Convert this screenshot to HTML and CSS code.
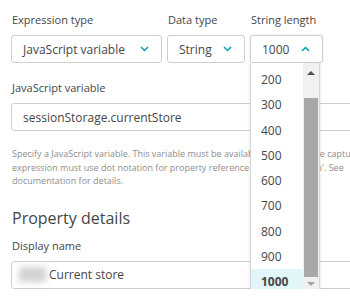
FILE: index.html
```html
<!DOCTYPE html>
<html lang="en">

<head>
    <meta charset="utf-8">
    <meta name="viewport" content="width=device-width, initial-scale=1.0">
    <title>Capture expression</title>
    <link rel="stylesheet" href="styles.css">
</head>

<body>
    <main class="form">
        <div class="row">
            <div class="field field-expr">
                <label class="label">Expression type</label>
                <div class="select">
                    <span>JavaScript variable</span>
                    <svg class="chevron" width="9" height="6" viewBox="0 0 9 6"><polyline points="1,1 4.5,4.5 8,1" /></svg>
                </div>
            </div>
            <div class="field field-type">
                <label class="label">Data type</label>
                <div class="select">
                    <span>String</span>
                    <svg class="chevron" width="9" height="6" viewBox="0 0 9 6"><polyline points="1,1 4.5,4.5 8,1" /></svg>
                </div>
            </div>
            <div class="field field-length">
                <label class="label">String length</label>
                <div class="select open">
                    <span>1000</span>
                    <svg class="chevron" width="9" height="6" viewBox="0 0 9 6"><polyline points="1,5 4.5,1.5 8,5" /></svg>
                </div>
                <!-- open dropdown list -->
                <div class="dropdown">
                    <ul class="options">
                        <li>200</li>
                        <li>300</li>
                        <li>400</li>
                        <li>500</li>
                        <li>600</li>
                        <li>700</li>
                        <li>800</li>
                        <li>900</li>
                        <li class="selected">1000</li>
                    </ul>
                    <div class="scrollbar">
                        <span class="arrow up"></span>
                        <span class="thumb"></span>
                        <span class="arrow down"></span>
                    </div>
                </div>
            </div>
        </div>

        <section class="group">
            <label class="label">JavaScript variable</label>
            <div class="input">sessionStorage.currentStore</div>
            <p class="help">Specify a JavaScript variable. This variable must be available at the time the capture<br>expression must use dot notation for property reference. i.e. 'app.location'. See<br>documentation for details.</p>
        </section>

        <h2 class="section-title">Property details</h2>
        <label class="label">Display name</label>
        <div class="input"><span class="redacted"></span>Current store</div>
    </main>
</body>

</html>
```

FILE: styles.css
```css
* {
    box-sizing: border-box;
}

body {
    margin: 0;
    overflow: hidden;
    background: #fff;
    color: #454646;
    font-family: "Open Sans", sans-serif;
}

.form {
    padding: 13px 0 0 11px;
}

.row {
    display: flex;
    gap: 5px;
}

.field {
    position: relative;
}

.field-expr {
    width: 151px;
}

.field-type {
    width: 78px;
}

.field-length {
    width: 73px;
}

.label {
    display: block;
    padding-left: 1px;
    margin-bottom: 8px;
    font-size: 11px;
    line-height: 14px;
}

.select {
    display: flex;
    align-items: center;
    justify-content: space-between;
    height: 28px;
    padding: 0 12px 0 11px;
    border: 1px solid #cfcfcf;
    border-radius: 3px;
    font-size: 12px;
}

.select.open {
    box-shadow: 0 0 2px rgba(0, 0, 0, 0.15);
}

.chevron polyline {
    fill: none;
    stroke: #00a1b2;
    stroke-width: 1.5;
}

.dropdown {
    position: absolute;
    top: 100%;
    left: 0;
    z-index: 2;
    display: flex;
    width: 70px;
    height: 231px;
    background: #fff;
    border: 1px solid #d6d6d6;
    border-top: none;
    box-shadow: 0 1px 3px rgba(0, 0, 0, 0.12);
}

.options {
    flex: 1;
    margin: 0;
    padding: 4px 0 0;
    list-style: none;
}

.options li {
    height: 25.25px;
    padding-left: 10px;
    font-size: 12px;
    line-height: 25.25px;
}

.options .selected {
    background: #e2f5f8;
    font-weight: 700;
}

.scrollbar {
    display: flex;
    flex-direction: column;
    align-items: center;
    width: 16px;
    background: #f1f1f1;
}

.arrow {
    width: 0;
    height: 0;
    border-left: 4px solid transparent;
    border-right: 4px solid transparent;
}

.arrow.up {
    margin: 8px 0 23px;
    border-bottom: 4px solid #505050;
}

.arrow.down {
    margin: 5px 0 7px;
    border-top: 4px solid #a3a3a3;
}

.thumb {
    flex: 1;
    width: 14px;
    background: #a8a8a8;
}

.group {
    margin-top: 18px;
}

.input {
    display: flex;
    align-items: center;
    width: 400px;
    height: 28px;
    padding-left: 11px;
    border: 1px solid #cfcfcf;
    border-radius: 3px;
    font-size: 12px;
}

.help {
    width: 400px;
    margin: 16px 0 0 1px;
    color: #8d8d8d;
    font-size: 9px;
    line-height: 13.5px;
    white-space: nowrap;
}

.section-title {
    margin: 20px 0 11px 1px;
    font-size: 16px;
    font-weight: 400;
    line-height: 20px;
}

.redacted {
    display: inline-block;
    width: 27px;
    height: 15px;
    margin: 0 3px 0 -4px;
    background: #d2d2d2;
    filter: blur(3px);
}
```
